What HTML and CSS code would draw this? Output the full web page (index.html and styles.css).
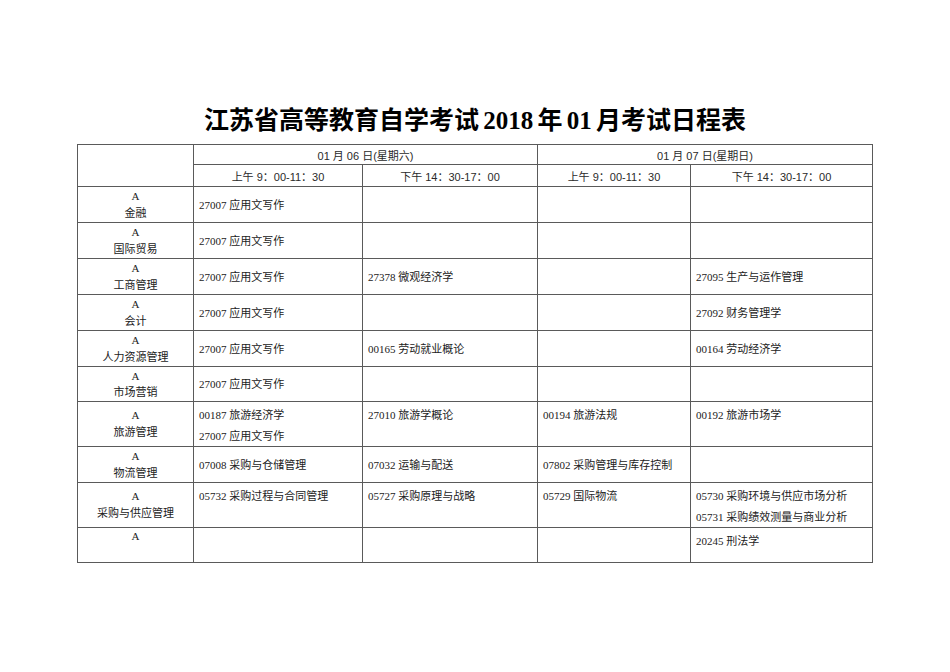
FILE: index.html
```html
<!DOCTYPE html>
<html lang="zh-CN">
<head>
<meta charset="utf-8">
<title>江苏省高等教育自学考试2018年01月考试日程表</title>
<link rel="stylesheet" href="styles.css">
</head>
<body>
<div class="page">
  <h1 class="title">江苏省高等教育自学考试 2018 年 01 月考试日程表</h1>
  <table class="schedule">
    <colgroup>
      <col class="c1"><col class="c2"><col class="c3"><col class="c4"><col class="c5">
    </colgroup>
    <thead>
      <tr class="h1">
        <th rowspan="2" class="blank"></th>
        <th colspan="2">01 月 06 日(星期六)</th>
        <th colspan="2">01 月 07 日(星期日)</th>
      </tr>
      <tr class="h2">
        <th>上午 9：00-11：30</th>
        <th>下午 14：30-17：00</th>
        <th>上午 9：00-11：30</th>
        <th>下午 14：30-17：00</th>
      </tr>
    </thead>
    <tbody>
      <tr class="r36">
        <td class="major"><span class="a">A</span><span>金融</span></td>
        <td>27007 应用文写作</td><td></td><td></td><td></td>
      </tr>
      <tr class="r36">
        <td class="major"><span class="a">A</span><span>国际贸易</span></td>
        <td>27007 应用文写作</td><td></td><td></td><td></td>
      </tr>
      <tr class="r36">
        <td class="major"><span class="a">A</span><span>工商管理</span></td>
        <td>27007 应用文写作</td><td>27378 微观经济学</td><td></td><td>27095 生产与运作管理</td>
      </tr>
      <tr class="r36">
        <td class="major"><span class="a">A</span><span>会计</span></td>
        <td>27007 应用文写作</td><td></td><td></td><td>27092 财务管理学</td>
      </tr>
      <tr class="r36">
        <td class="major"><span class="a">A</span><span>人力资源管理</span></td>
        <td>27007 应用文写作</td><td>00165 劳动就业概论</td><td></td><td>00164 劳动经济学</td>
      </tr>
      <tr class="r35">
        <td class="major"><span class="a">A</span><span>市场营销</span></td>
        <td>27007 应用文写作</td><td></td><td></td><td></td>
      </tr>
      <tr class="r45 top">
        <td class="major"><span class="a">A</span><span>旅游管理</span></td>
        <td><p>00187 旅游经济学</p><p>27007 应用文写作</p></td>
        <td><p>27010 旅游学概论</p></td>
        <td><p>00194 旅游法规</p></td>
        <td><p>00192 旅游市场学</p></td>
      </tr>
      <tr class="r36">
        <td class="major"><span class="a">A</span><span>物流管理</span></td>
        <td>07008 采购与仓储管理</td><td>07032 运输与配送</td><td>07802 采购管理与库存控制</td><td></td>
      </tr>
      <tr class="r45 top">
        <td class="major"><span class="a">A</span><span>采购与供应管理</span></td>
        <td><p>05732 采购过程与合同管理</p></td>
        <td><p>05727 采购原理与战略</p></td>
        <td><p>05729 国际物流</p></td>
        <td><p>05730 采购环境与供应市场分析</p><p>05731 采购绩效测量与商业分析</p></td>
      </tr>
      <tr class="r34 top">
        <td class="major"><span class="a">A</span><span>&nbsp;</span></td>
        <td></td><td></td><td></td>
        <td><p>20245 刑法学</p></td>
      </tr>
    </tbody>
  </table>
</div>
</body>
</html>
```

FILE: styles.css
```css
html, body {
  margin: 0;
  padding: 0;
  background: #ffffff;
}

.page {
  width: 950px;
  padding-top: 106px;
}

.title {
  margin: 0 0 8px 0;
  height: 30px;
  line-height: 30px;
  text-align: center;
  font-family: "Liberation Serif", "Noto Sans CJK SC", serif;
  font-weight: 700;
  font-size: 25px;
  color: #000000;
  letter-spacing: 0;
  word-spacing: -2px;
}

.schedule {
  margin-left: 77px;
  width: 796px;
  table-layout: fixed;
  border-collapse: collapse;
  font-family: "Liberation Serif", "Noto Sans CJK SC", serif;
  font-size: 11px;
  color: #222222;
}

.c1 { width: 116px; }
.c2 { width: 169px; }
.c3 { width: 175px; }
.c4 { width: 153px; }
.c5 { width: 182px; }

.schedule th,
.schedule td {
  border: 1px solid #5a5a5a;
  padding: 0 0 0 5px;
  box-sizing: border-box;
}

.schedule th {
  font-family: "Liberation Sans", "Noto Sans CJK SC", sans-serif;
  font-weight: 400;
  font-size: 11px;
  color: #2a2a2a;
  text-align: center;
  padding: 0;
  vertical-align: middle;
}

.h1 th { height: 20px; }
.h2 th { height: 22px; }

.schedule td {
  vertical-align: middle;
  text-align: left;
  line-height: 16px;
}

.r36 td { height: 36px; }
.r35 td { height: 35px; }
.r45 td { height: 45px; }
.r34 td { height: 34px; }

.top td {
  vertical-align: top;
  padding-top: 2px;
}

.schedule p {
  margin: 0;
  line-height: 22px;
}

.schedule p + p {
  line-height: 20px;
}

.schedule td.major {
  vertical-align: middle;
  text-align: center;
  padding: 0;
  line-height: 17px;
}

.schedule .r35 td.major {
  line-height: 16px;
}

.major span {
  display: block;
}

.major .a {
  font-family: "Liberation Serif", serif;
}
```
